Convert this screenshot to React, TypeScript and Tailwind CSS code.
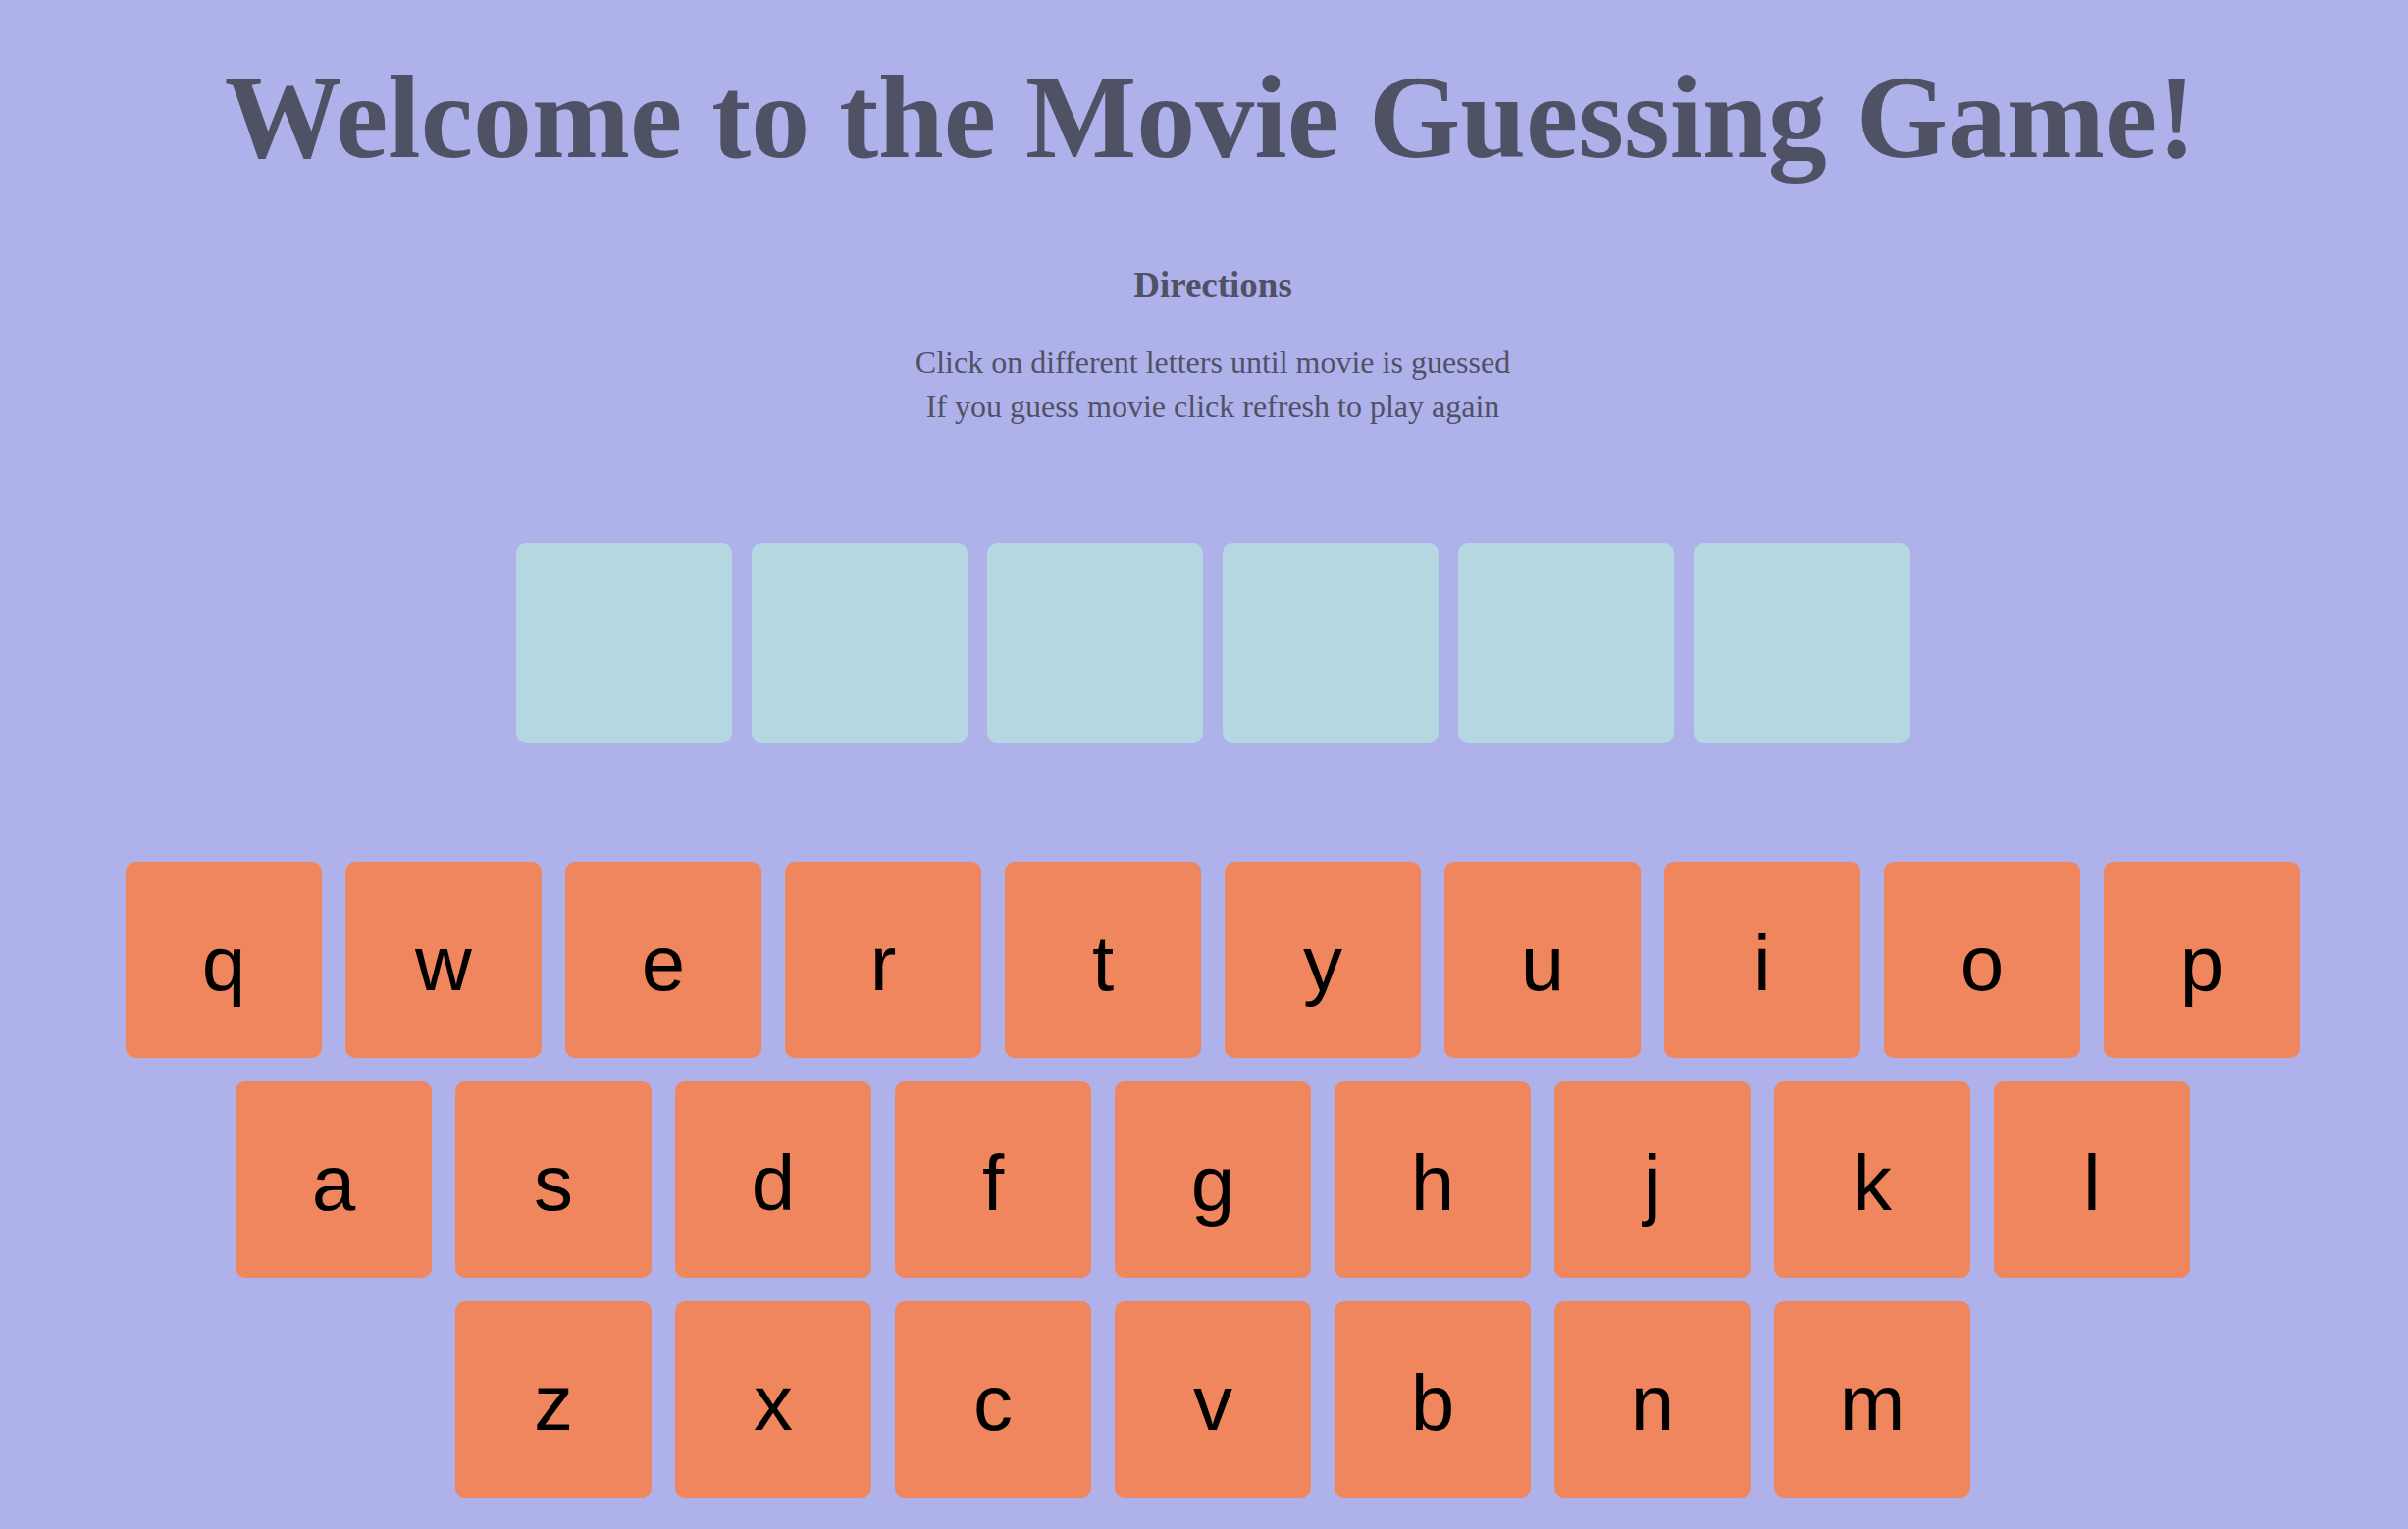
const rows = ["qwertyuiop", "asdfghjkl", "zxcvbnm"];

const movieLength = 6;

function Tile() {
  return <div className="w-[220px] h-[204px] rounded-[10px] bg-[#b4d7e2]" />;
}

function Key({ letter }: { letter: string }) {
  return (
    <button className="w-[200px] h-[200px] rounded-[10px] bg-[#ef865d] text-black text-[80px] leading-[120px] pt-[8px] font-['Liberation_Sans',Arial,sans-serif] flex items-center justify-center">
      {letter}
    </button>
  );
}

export default function App() {
  return (
    <div className="min-h-screen w-full bg-[#afb1ea] text-[#4f5165] font-['Liberation_Serif','Times_New_Roman',serif] flex flex-col items-center">
      <h1 className="mt-[60px] pl-[13px] text-[120px] leading-none font-bold">
        Welcome to the Movie Guessing Game!
      </h1>
      <div className="pl-[18px] flex flex-col items-center">
        <h2 className="mt-[92px] text-[37px] leading-none font-bold">Directions</h2>
        <div className="mt-[38px] text-[32px] leading-[45px] text-center">
          <p>Click on different letters until movie is guessed</p>
          <p>If you guess movie click refresh to play again</p>
        </div>
      </div>
      <div className="mt-[116px] pl-[18px] flex gap-[20px]">
        {Array.from({ length: movieLength }).map((_, i) => (
          <Tile key={i} />
        ))}
      </div>
      <div className="mt-[121px] pl-[18px] flex flex-col items-center gap-[24px]">
        {rows.map((row) => (
          <div key={row} className="flex gap-[24px]">
            {row.split("").map((letter) => (
              <Key key={letter} letter={letter} />
            ))}
          </div>
        ))}
      </div>
    </div>
  );
}
